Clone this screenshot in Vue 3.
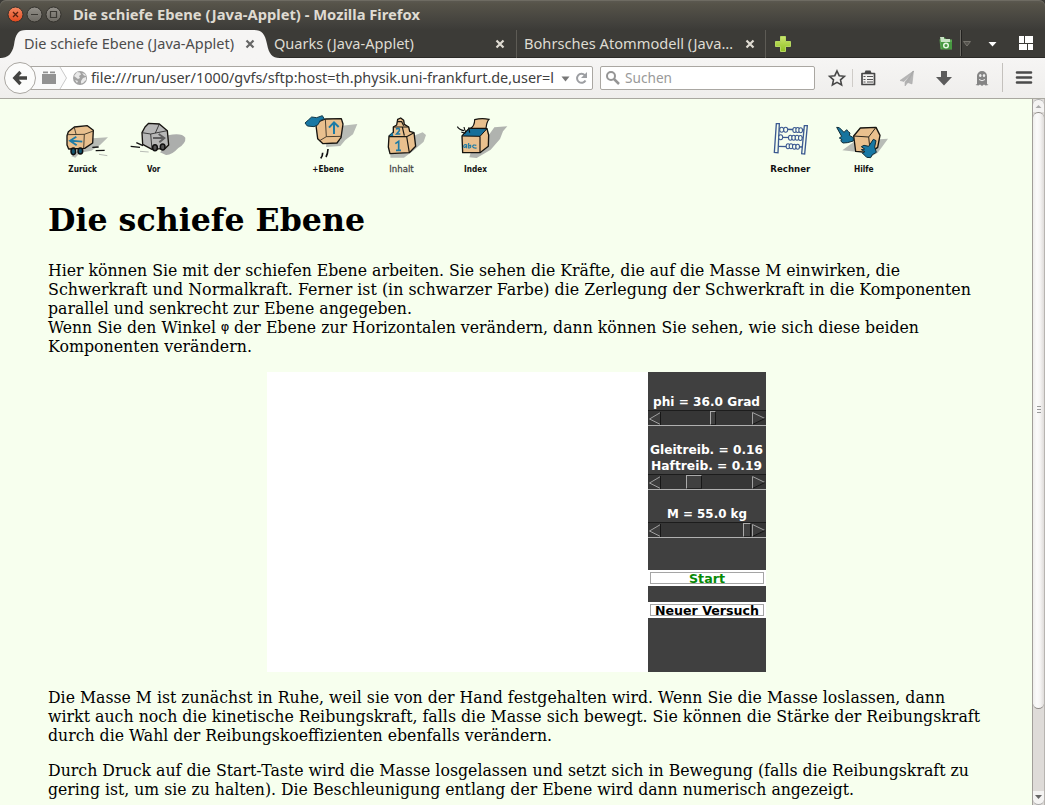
<script setup>
import { h } from 'vue'

// Single line of real text, fitted to a given width.
const FitText = (p) =>
  h('svg', { width: p.w, height: p.height || 20, style: 'display:block;overflow:visible;flex:none' }, [
    h('text', {
      x: 0, y: p.base || 15, fill: 'currentColor', textLength: p.w,
      lengthAdjust: 'spacingAndGlyphs',
    }, p.text),
  ])
FitText.props = ['text', 'w', 'base', 'height']

const intro = [
  ['Hier können Sie mit der schiefen Ebene arbeiten. Sie sehen die Kräfte, die auf die Masse M einwirken, die', 852],
  ['Schwerkraft und Normalkraft. Ferner ist (in schwarzer Farbe) die Zerlegung der Schwerkraft in die Komponenten', 923],
  ['parallel und senkrecht zur Ebene angegeben.', 364],
]
const details = [
  ['Die Masse M ist zunächst in Ruhe, weil sie von der Hand festgehalten wird. Wenn Sie die Masse loslassen, dann', 897],
  ['wirkt auch noch die kinetische Reibungskraft, falls die Masse sich bewegt. Sie können die Stärke der Reibungskraft', 932],
  ['durch die Wahl der Reibungskoeffizienten ebenfalls verändern.', 504],
]
const start = [
  ['Durch Druck auf die Start-Taste wird die Masse losgelassen und setzt sich in Bewegung (falls die Reibungskraft zu', 921],
  ['gering ist, um sie zu halten). Die Beschleunigung entlang der Ebene wird dann numerisch angezeigt.', 806],
]

const sliders = {
  phi: { left: 62, width: 6 },
  reib: { left: 38, width: 16 },
  mass: { left: 95, width: 8 },
}
</script>

<template>
  <div class="window">
    <header class="title">
      <svg class="buttons" width="62" height="30" viewBox="0 0 62 30">
        <defs>
          <linearGradient id="gr" x1="0" y1="0" x2="0" y2="1"><stop offset="0" stop-color="#f58a63" /><stop offset="1" stop-color="#e2481d" /></linearGradient>
          <linearGradient id="gg" x1="0" y1="0" x2="0" y2="1"><stop offset="0" stop-color="#93908a" /><stop offset="1" stop-color="#6d6a63" /></linearGradient>
          <linearGradient id="gp" x1="0" y1="0" x2="0" y2="1"><stop offset="0" stop-color="#cbe56e" /><stop offset="1" stop-color="#8fc022" /></linearGradient>
        </defs>
        <circle cx="15.500" cy="14.500" r="7.500" fill="url(#gr)" stroke="#33312c" />
        <circle cx="34.500" cy="14.500" r="7.500" fill="url(#gg)" stroke="#33312c" />
        <circle cx="53.500" cy="14.500" r="7.500" fill="url(#gg)" stroke="#33312c" />
        <path d="M13 12l5 5M18 12l-5 5" stroke="#54200f" stroke-width="1.300" />
        <path d="M31 14.500h7M50.500 11.500h6v6h-6z" fill="none" stroke="#3b3934" stroke-width="1.200" />
      </svg>
      <FitText text="Die schiefe Ebene (Java-Applet) - Mozilla Firefox" :w="347" />
    </header>

    <div class="tabs">
      <div class="tab active">
        <svg class="shape" width="280" height="28" viewBox="0 0 280 28">
          <path d="M0 28C8 28 12 24 14 15C15.500 4 18 0 26 0H254C262 0 265 4 267 14C269 24 272 28 280 28Z" fill="#f6f5f4" />
        </svg>
        <FitText text="Die schiefe Ebene (Java-Applet)" :w="210" />
        <svg class="x" width="10" height="10" viewBox="0 0 10 10"><path d="M1.500 1.500l7 7M8.500 1.500l-7 7" /></svg>
      </div>
      <div class="tab second">
        <FitText text="Quarks (Java-Applet)" :w="140" />
        <svg class="x" width="10" height="10" viewBox="0 0 10 10"><path d="M1.500 1.500l7 7M8.500 1.500l-7 7" /></svg>
      </div>
      <div class="tab third">
        <FitText text="Bohrsches Atommodell (Java…" :w="209" />
        <svg class="x" width="10" height="10" viewBox="0 0 10 10"><path d="M1.500 1.500l7 7M8.500 1.500l-7 7" /></svg>
      </div>
      <svg class="plus" width="18" height="28" viewBox="774 30 18 28">
        <path d="M780.500 36.500h5v5h5v5h-5v5h-5v-5h-5v-5h5z" fill="url(#gp)" stroke="#b5d860" />
      </svg>
      <svg class="tabtools" width="105" height="28" viewBox="936 30 105 28">
        <path d="M939.500 39.500l5-2 2 2h5.500v10h-11.500z" fill="#5aa653" />
        <path d="M940 37h4v2h6v3h-9z" fill="#c8e3c4" />
        <path d="M941 42h11v7h-10z" fill="#469840" />
        <circle cx="946" cy="45.500" r="2.300" fill="none" stroke="#e4f5e1" stroke-width="1.500" />
        <path d="M960.500 30v26" stroke="#6d6b65" /><path d="M961.500 30v26" stroke="#22211f" />
        <path d="M963.500 41.500h7l-3.500 4.500z" fill="#55534e" stroke="#77756e" />
        <path d="M988.500 42h8l-4 4.500z" fill="#fff" />
        <path d="M1019 36h5v7h-5zM1025 36h8v7h-8zM1019 44h8v6h-8zM1028 44h5v6h-5z" fill="#fff" />
      </svg>
    </div>

    <div class="nav">
      <svg class="back" width="34" height="34" viewBox="3 61 34 34">
        <circle cx="20" cy="78" r="15.500" fill="#fcfcfb" stroke="#aaa7a2" />
        <path d="M27 78H16M20.500 72L14.800 78l5.700 6" fill="none" stroke="#444442" stroke-width="3.300" />
      </svg>
      <div class="url">
        <svg width="69" height="22" viewBox="22 67 69 22">
          <path d="M22 67H60L67 78L60 89H22z" fill="#fafafa" />
          <path d="M42 74h14v10h-14zM43 71.500h5v1.800h-5zM50 71.500h5v1.800h-5z" fill="#929292" />
          <path d="M60 67L66.500 78L60 89" fill="none" stroke="#c9c9c9" />
          <circle cx="80" cy="78" r="7" fill="#a2a2a2" />
          <path d="M74 76l3-4 3 .5 1 2-2 1.500 1 2-2 1-2-1.500zM81 81l2-3 3-1v3l-3 3-2 .5zM82 73l3 1 1 2-2-.5zM75 80l3 1-1 2z" fill="#e9e9e9" />
        </svg>
        <FitText class="address" text="file:///run/user/1000/gvfs/sftp:host=th.physik.uni-frankfurt.de,user=l" :w="463" />
        <svg class="urltools" width="34" height="22" viewBox="558 67 34 22">
          <path d="M561.500 76.500h8l-4 5z" fill="#777" />
          <path d="M584.800 75.200A4.500 4.500 0 1 0 585.500 80.500" fill="none" stroke="#9d9fa3" stroke-width="2" />
          <path d="M587 72v6h-6z" fill="#9d9fa3" />
        </svg>
      </div>
      <div class="search">
        <svg width="20" height="22" viewBox="603 67 20 22">
          <circle cx="611" cy="76" r="4" fill="none" stroke="#959595" stroke-width="2" /><path d="M614 79l5 5" stroke="#959595" stroke-width="2.500" />
        </svg>
        <FitText text="Suchen" :w="47" />
      </div>
      <svg class="tools" width="225" height="40" viewBox="820 58 225 40">
        <path d="M837 71l2.200 4.700 5.200.6-3.900 3.500 1.100 5.200-4.600-2.600-4.600 2.600 1.100-5.200-3.900-3.500 5.200-.6z" fill="none" stroke="#474747" stroke-width="1.600" />
        <path d="M852.500 69v18" stroke="#cfccc8" />
        <path d="M862 73.500h12.500v11h-12.500z" fill="none" stroke="#474747" stroke-width="1.700" stroke-linejoin="round" />
        <path d="M864.500 73l1-2.500h5l1 2.500z" fill="#474747" />
        <path d="M863.500 76.500h2M867 76.500h6M863.500 79.500h2M867 79.500h6M863.500 82h2M867 82h6" stroke="#555" stroke-width="1" />
        <path d="M913.500 71L900 80.500l4 1zM913.500 71L905 82v4l2.500-3zM913.500 71l-7 11 5.500 2z" fill="#b5b5b5" stroke="#a5a5a5" stroke-width=".5" />
        <path d="M941 71h6v6h5l-8 8.500-8-8.500h5z" fill="#5c5c5c" />
        <path d="M977 84V76a5 5 0 0 1 10 0v8l1.500 1-3 .5-1.500-1-2 1.500-2-1.500-1.500 1-3-.5z" fill="#858585" />
        <ellipse cx="980.300" cy="75.500" rx="1.200" ry="1.600" fill="#eee" /><ellipse cx="984" cy="75.500" rx="1.200" ry="1.600" fill="#eee" />
        <path d="M979 79.500q3 2.500 6 0" fill="none" stroke="#eee" />
        <path d="M1002.500 63v29" stroke="#c4c1bd" />
        <path d="M1017 72.500h14M1017 77.500h14M1017 82.500h14" stroke="#4a4a4a" stroke-width="2.600" stroke-linecap="round" />
      </svg>
    </div>

    <div class="view">
      <main>
        <nav class="links">
          <svg width="50" height="60" viewBox="39 30 150 180">
            <path d="M128 100L174 97L150 120L124 137L90 143L76 158L64 154Z" fill="#b8bcb6" />
            <path d="M51 92L55 80L73 66L112 62L130 76L128 114L104 130L56 132L51 120Z" fill="#e9c08e" stroke="#15130f" stroke-width="4" stroke-linejoin="round" />
            <path d="M51 89L103 88L130 78M103 88L101 130M73 68L78 87" fill="none" stroke="#2c261c" stroke-width="2.500" />
            <path d="M97 110L60 107M79 95L60 107L80 121" fill="none" stroke="#1e7ba6" stroke-width="5.500" />
            <ellipse cx="70" cy="139" rx="7" ry="10" fill="#12546e" stroke="#111" stroke-width="4.500" /><ellipse cx="91" cy="138" rx="7" ry="9" fill="#12546e" stroke="#111" stroke-width="4.500" />
            <path d="M127 127L146 126M137 137L164 136" stroke="#111" stroke-width="4" /><path d="M147 148L172 152" stroke="#b8bcb6" stroke-width="3" />
            <text x="55" y="200" textLength="86" lengthAdjust="spacingAndGlyphs">Zurück</text>
          </svg>
          <svg class="n2" width="59" height="60" viewBox="237 30 177 180">
            <path d="M354 91Q395 82 406 98Q408 115 385 129Q365 151 348 150L330 142L353 119Z" fill="#acaeac" />
            <path d="M285 66L296 55L328 57L352 77L356 120L346 130L306 133L278 118L276 83Z" fill="#b7b8b7" stroke="#15130f" stroke-width="4" stroke-linejoin="round" />
            <path d="M276 83L302 87L352 77M302 87L306 133M328 57L316 84" fill="none" stroke="#242424" stroke-width="2.500" />
            <path d="M309 99H342M326 87L343 99L328 112" fill="none" stroke="#5e5e5e" stroke-width="6" />
            <ellipse cx="315" cy="128" rx="7" ry="9" fill="#555" stroke="#111" stroke-width="4.500" /><ellipse cx="338" cy="126" rx="7" ry="9" fill="#555" stroke="#111" stroke-width="4.500" />
            <path d="M259 113L279 122M242 124L270 127" stroke="#111" stroke-width="4" /><path d="M270 139L296 141" stroke="#b8bcb6" stroke-width="3" />
            <text x="291" y="200" textLength="40" lengthAdjust="spacingAndGlyphs">Vor</text>
          </svg>
          <svg class="n3" width="55" height="60" viewBox="27 30 165 180">
            <path d="M142 62L187 57L174 88L151 105L136 123L93 126L94 115L137 105Z" fill="#b8bcb6" />
            <path d="M62 54L91 42L139 41L144 57L138 98L126 114L84 116L68 101Z" fill="#e9c08e" stroke="#15130f" stroke-width="4" stroke-linejoin="round" />
            <path d="M91 42L94 95L138 94M94 95L74 107" fill="none" stroke="#2c261c" stroke-width="2.500" />
            <path d="M117 87V52M102 68L117 52L131 66" fill="none" stroke="#1e7ba6" stroke-width="6" />
            <path d="M30 54L40 45L50 36L65 38L82 32L88 42L76 46L69 59L57 65L37 63Z" fill="#1878a4" stroke="#143847" stroke-width="3" stroke-linejoin="round" />
            <path d="M99 132Q98 148 93 156M83 143Q83 154 77 160" fill="none" stroke="#111" stroke-width="5" />
            <text x="52" y="200" textLength="95" lengthAdjust="spacingAndGlyphs">+Ebene</text>
          </svg>
          <svg class="n4" width="40" height="60" viewBox="21 30 120 180">
            <path d="M105 91L128 82L138 90L131 110L100 137L72 158L31 158V146L92 142Z" fill="#b8bcb6" />
            <path d="M40 66L50 60L53 43L62 39L71 46L73 58L86 66L89 79L102 83L107 124L88 143L30 146L25 126L27 93L40 82Z" fill="#e9c08e" stroke="#15130f" stroke-width="4" stroke-linejoin="round" />
            <path d="M27 95H80L102 83M80 95L88 143M39 66H67L86 66M67 66L73 92M51 50H65L71 62" fill="none" stroke="#1b1913" stroke-width="3.500" />
            <path d="M28 93L37 82L40 93z" fill="#1878a4" />
            <path d="M48 72Q60 67 58 77L50 87H61M46 116L56 109V136M48 136H63" fill="none" stroke="#1e7ba6" stroke-width="5" />
            <text class="soft" x="28" y="200" textLength="73" lengthAdjust="spacingAndGlyphs">Inhalt</text>
          </svg>
          <svg class="n5" width="53" height="60" viewBox="228 30 159 180">
            <path d="M326 91L343 67L382 64L369 79L360 102L332 134L290 159L268 157L272 143L306 141L326 116Z" fill="#b0b3af" />
            <path d="M246 93L268 70L321 71L326 90L325 124L300 143L248 143Z" fill="#e9c08e" stroke="#15130f" stroke-width="4" stroke-linejoin="round" />
            <path d="M246 93L268 70L321 71L300 94Z" fill="#176f99" stroke="#15130f" stroke-width="3" />
            <path d="M272 70Q284 62 284 44Q305 38 327 43Q320 50 318 70Z" fill="#e9c08e" stroke="#15130f" stroke-width="3.500" />
            <path d="M300 94V143M232 65Q238 75 252 77M252 66Q254 77 258 82M266 67L269 83M244 81L256 85" fill="none" stroke="#111" stroke-width="3.500" />
            <path d="M261 120Q251 116 251 125Q254 131 260 122V130M266 114V129Q274 130 272 121L266 123M289 121Q278 118 278 125Q280 130 290 129" fill="none" stroke="#1e7ba6" stroke-width="3.500" />
            <text x="252" y="200" textLength="69" lengthAdjust="spacingAndGlyphs">Index</text>
          </svg>
          <svg class="n6" width="43" height="60" viewBox="27 30 129 180">
            <g fill="#f6ffee" stroke="#3c5a91" stroke-width="4">
              <path d="M57 72L133 75M54 97L130 98M53 124L128 126" />
              <path d="M49 56L58 56L54 143L43 142ZM133 62L142 62L134 147L125 146Z" />
              <g stroke-width="3.200">
                <ellipse cx="65" cy="74" rx="6" ry="7.500" /><ellipse cx="77" cy="74" rx="6" ry="7.500" /><ellipse cx="104" cy="75" rx="5.500" ry="7.500" /><ellipse cx="113" cy="75" rx="5.500" ry="7.500" /><ellipse cx="122" cy="76" rx="5.500" ry="7.500" />
                <ellipse cx="62" cy="97" rx="6" ry="7.500" /><ellipse cx="91" cy="98" rx="5.500" ry="7.500" /><ellipse cx="101" cy="98" rx="5.500" ry="7.500" /><ellipse cx="111" cy="98" rx="5.500" ry="7.500" /><ellipse cx="121" cy="99" rx="5.500" ry="7.500" />
                <ellipse cx="84" cy="124" rx="5.500" ry="7.500" /><ellipse cx="93" cy="124" rx="5.500" ry="7.500" /><ellipse cx="103" cy="125" rx="5.500" ry="7.500" /><ellipse cx="113" cy="125" rx="5.500" ry="7.500" />
              </g>
            </g>
            <text x="31" y="201" textLength="120" lengthAdjust="spacingAndGlyphs">Rechner</text>
          </svg>
          <svg class="n7" width="53" height="60" viewBox="228 30 159 180">
            <path d="M358 103L384 101L366 126L353 143L326 159L301 142L247 136L280 112Z" fill="#b8bcb6" />
            <path d="M281 93L301 69L348 67L360 91L353 127L330 143L287 139Z" fill="#e9c08e" stroke="#15130f" stroke-width="4" stroke-linejoin="round" />
            <path d="M281 93L326 96L348 67M326 96L331 143" fill="none" stroke="#2c261c" stroke-width="3" />
            <path d="M230 67L238 68L252 82L260 74L265 80L270 84L268 91L280 98V108L262 113L249 114L242 108L246 104L238 99L245 94Z" fill="#17749e" stroke="#102d38" stroke-width="3" stroke-linejoin="round" />
            <path d="M304 125L312 121L326 124L340 103L348 107L344 126L349 142L337 149L332 158L320 157L307 144L315 140L304 134L314 132Z" fill="#1878a4" stroke="#102d38" stroke-width="3" stroke-linejoin="round" />
            <text x="282" y="202" textLength="59" lengthAdjust="spacingAndGlyphs">Hilfe</text>
          </svg>
        </nav>

        <h1><FitText text="Die schiefe Ebene" :w="317" base="30" height="38" /></h1>
        <div class="para">
          <FitText v-for="l in intro" :key="l[0]" :text="l[0]" :w="l[1]" height="19" />
          <div class="mixed">
            <FitText text="Wenn Sie den Winkel" :w="168" height="19" />
            <span class="phi">φ</span>
            <FitText text="der Ebene zur Horizontalen verändern, dann können Sie sehen, wie sich diese beiden" :w="685" height="19" />
          </div>
          <FitText text="Komponenten verändern." :w="204" height="19" />
        </div>

        <div class="applet">
          <div class="panel">
            <div class="label"><FitText text="phi = 36.0 Grad" :w="107" base="12" /></div>
            <div class="slider"><i class="arrow"><svg width="13" height="15"><path d="M12.500 1.500L1.500 8L12.500 13.500" /><path class="dark" d="M12.500 1v13" /></svg></i><b :style="{ marginLeft: sliders.phi.left - 13 + 'px', width: sliders.phi.width + 'px' }"></b><i class="arrow right"><svg width="14" height="15"><path d="M.5 14V1.500L13 7.500" /><path class="dark" d="M13 7.500L.5 13.500" /></svg></i></div>
            <div class="label gap"><FitText text="Gleitreib. = 0.16" :w="113" base="12" /></div>
            <div class="label"><FitText text="Haftreib. = 0.19" :w="111" base="12" /></div>
            <div class="slider"><i class="arrow"><svg width="13" height="15"><path d="M12.500 1.500L1.500 8L12.500 13.500" /><path class="dark" d="M12.500 1v13" /></svg></i><b :style="{ marginLeft: sliders.reib.left - 13 + 'px', width: sliders.reib.width + 'px' }"></b><i class="arrow right"><svg width="14" height="15"><path d="M.5 14V1.500L13 7.500" /><path class="dark" d="M13 7.500L.5 13.500" /></svg></i></div>
            <div class="label gap"><FitText text="M = 55.0 kg" :w="80" base="12" /></div>
            <div class="slider"><i class="arrow"><svg width="13" height="15"><path d="M12.500 1.500L1.500 8L12.500 13.500" /><path class="dark" d="M12.500 1v13" /></svg></i><b :style="{ marginLeft: sliders.mass.left - 13 + 'px', width: sliders.mass.width + 'px' }"></b><i class="arrow right"><svg width="14" height="15"><path d="M.5 14V1.500L13 7.500" /><path class="dark" d="M13 7.500L.5 13.500" /></svg></i></div>
            <div class="button start"><FitText text="Start" :w="36" base="11" /></div>
            <div class="button"><FitText text="Neuer Versuch" :w="104" base="11" /></div>
          </div>
        </div>

        <div class="para">
          <FitText v-for="l in details" :key="l[0]" :text="l[0]" :w="l[1]" height="19" />
        </div>
        <div class="para">
          <FitText v-for="l in start" :key="l[0]" :text="l[0]" :w="l[1]" height="19" />
        </div>
      </main>
      <aside class="scroll">
        <div class="cap"><svg width="11" height="12"><path d="M2.500 8h6l-3-3z" fill="#aaa" /></svg></div>
        <div class="thumb"><span></span><span></span><span></span></div>
        <div class="trough"></div>
        <div class="cap bottom"><svg width="11" height="12"><path d="M2 4h7l-3.500 4z" fill="#666" /></svg></div>
      </aside>
    </div>
  </div>
</template>

<style>
html, body { margin: 0; overflow: hidden; background: #3c3b37; }
</style>

<style scoped>
.window { width: 1045px; height: 805px; display: flex; flex-direction: column; overflow: hidden; font-family: "Noto Sans", "Open Sans", sans-serif; font-size: 14px; }
.title { height: 30px; flex: none; display: flex; align-items: center; color: #dfdbd2; font-weight: 700; font-size: 14px; background: linear-gradient(#5c5a52 0, #565349 4px, #403f3b 26px, #3c3b37); border-radius: 6px 6px 0 0; box-shadow: inset 0 1px #6e6b62; }
.buttons { margin-right: 11px; flex: none; }
.tabs { height: 28px; flex: none; display: flex; align-items: center; background: #3c3b37; color: #dfdbd2; box-shadow: inset 0 -1px #2b2a27; }
.tab { box-sizing: border-box; height: 28px; flex: none; display: flex; align-items: center; position: relative; justify-content: space-between; }
.tab > svg { position: relative; }
.active { width: 266px; padding: 0 11px 0 24px; color: #4c4c4c; }
.tab > .shape { position: absolute; left: 0; top: 0; }
.second { width: 251px; padding: 0 11px 0 8px; border-right: 1px solid #5d5b55; }
.third { width: 249px; padding: 0 10px 0 7px; border-right: 1px solid #5d5b55; }
.x { stroke: currentColor; stroke-width: 2.2; fill: none; }
.active .x { stroke: #666; }
.plus { margin-left: 8px; }
.tabtools { margin-left: 144px; }
.nav { height: 40px; flex: none; display: flex; align-items: center; background: linear-gradient(#f6f5f4, #efeeec); border-bottom: 1px solid #a9a8a0; }
.back { margin-left: 3px; position: relative; z-index: 1; }
.url, .search { box-sizing: border-box; height: 24px; border: 1px solid #aaa7a2; border-radius: 2px; background: #fff; display: flex; align-items: center; color: #404040; flex: none; }
.url { width: 572px; margin-left: -16px; overflow: hidden; }
.urltools { margin-left: 4px; }
.search { width: 215px; margin-left: 7px; padding-left: 2px; color: #999; }
.search > svg:first-child { margin-right: 2px; }
.tools { margin-left: 5px; flex: none; }
.view { flex: 1; min-height: 0; display: flex; }
main { flex: 1; background: #f7ffee; overflow: hidden; padding: 16px 48px 0; font: 16px/19px "DejaVu Serif", serif; color: #000; white-space: nowrap; }
.links { display: flex; height: 60px; margin-left: 15px; }
.links svg { flex: none; }
.links text { font: 700 28px "DejaVu Sans", sans-serif; fill: #111; }
.links .soft { fill: #444; font-weight: 400; stroke: #444; stroke-width: .8px; }
.n2 { margin-left: 16px; }
.n3 { margin-left: 116px; }
.n4 { margin-left: 28px; }
.n5 { margin-left: 29px; }
.n6 { margin-left: 260px; }
.n7 { margin-left: 24px; }
h1 { font-size: 32px; line-height: 38px; margin: 26px 0 22px; font-weight: 700; }
.para { margin: 0 0 16px; }
.mixed { display: flex; height: 19px; }
.phi { width: 18px; flex: none; text-align: center; font: 400 13px/17px "DejaVu Sans", sans-serif; }
.applet { width: 499px; height: 300px; margin: 0 0 16px 219px; background: #fff; display: flex; justify-content: flex-end; }
.panel { box-sizing: border-box; width: 118px; height: 300px; background: #404040; padding-top: 22px; font: 700 12.5px "DejaVu Sans", sans-serif; color: #fff; }
.label { height: 16px; display: flex; justify-content: center; align-items: flex-start; margin-left: -1px; }
.gap { margin-top: 16px; }
.slider { box-sizing: border-box; height: 16px; display: flex; border-top: 1px solid #1c1c1c; border-bottom: 1px solid #b0b0b0; background: #363636; }
.arrow { width: 13px; height: 14px; overflow: hidden; }
.arrow svg { display: block; fill: #3d3d3d; stroke: #a0a0a0; stroke-width: 1; }
.arrow .dark { stroke: #161616; fill: none; }
.right { width: 14px; margin-left: auto; }
.slider b { box-sizing: border-box; height: 14px; background: #404040; border: 1px solid #aaa; border-right-color: #171717; border-bottom-color: #222; }
.button { box-sizing: border-box; height: 16px; margin-top: 16px; border: 2px solid #fff; background: #fff; outline: 1px solid #a5a5a5; outline-offset: -3px; color: #000; display: flex; justify-content: center; align-items: flex-start; }
.start { margin-top: 32px; color: #078a07; }
.scroll { width: 13px; display: flex; flex-direction: column; box-sizing: border-box; border-left: 1px solid #a19e99; border-right: 1px solid #b7b4b0; background: #dedbd8; }
.cap { height: 13px; flex: none; background: #f4f3f2; border-radius: 6px 6px 0 0; border-top: 1px solid #aaa; box-sizing: border-box; }
.bottom { height: 14px; border-radius: 0 0 6px 6px; border-top: 0; border-bottom: 1px solid #aaa; }
.cap svg { display: block; }
.thumb { height: 597px; box-sizing: border-box; flex: none; padding-bottom: 3px; border: 1px solid #8f8c88; border-left: 0; border-right: 0; border-radius: 6px; background: linear-gradient(90deg, #efeeec, #fbfbfb 35%, #f5f4f3 65%, #dfdcda); display: flex; flex-direction: column; gap: 2px; justify-content: center; align-items: center; }
.thumb span { width: 4px; height: 1px; background: #999; }
.trough { flex: 1; }
</style>
